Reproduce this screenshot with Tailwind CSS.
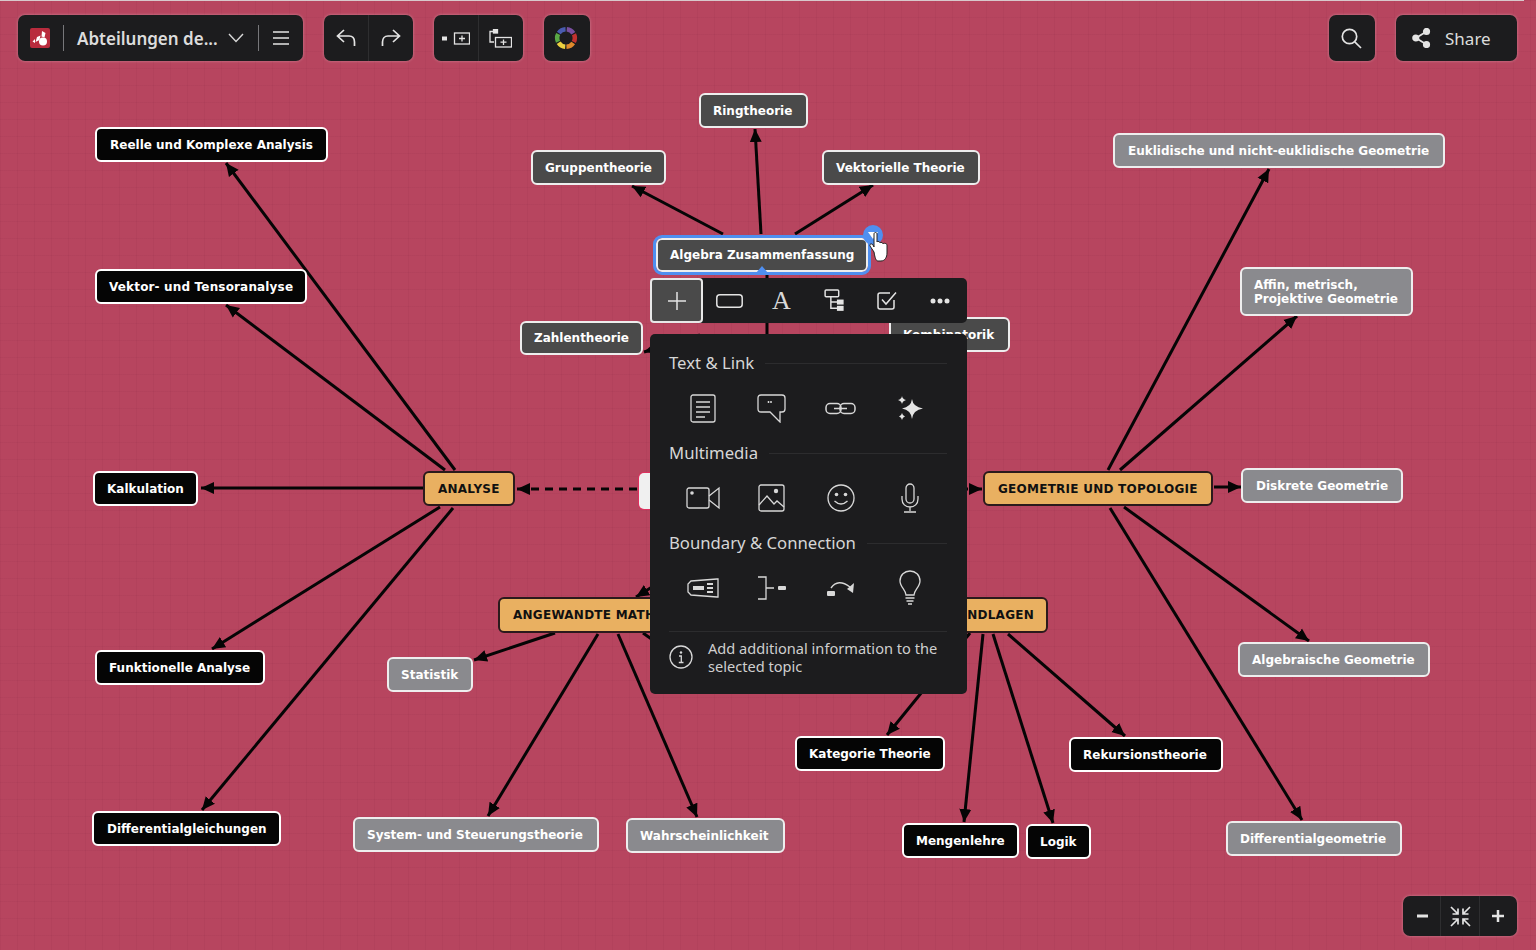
<!DOCTYPE html>
<html lang="de">
<head>
<meta charset="utf-8">
<title>Abteilungen der Mathematik</title>
<script src="https://cdn.jsdelivr.net/npm/@tailwindcss/browser@4"></script>
</head>
<body class="m-0">
<div class="relative w-[1536px] h-[950px] overflow-hidden bg-[#b7455f] font-['Noto_Sans',sans-serif]">
  <!-- grid -->
  <div class="absolute inset-0 bg-[linear-gradient(rgba(120,30,60,0.07)_1px,transparent_1px),linear-gradient(90deg,rgba(120,30,60,0.07)_1px,transparent_1px)] bg-[size:17px_17px]"></div>
  <div class="absolute left-0 top-0 h-px w-[1524px] bg-[#d8c8cc]"></div>

  <!-- edges -->
  <svg class="absolute inset-0" width="1536" height="950" fill="none" stroke="#050505" stroke-width="3">
    <defs>
      <marker id="a" markerUnits="userSpaceOnUse" markerWidth="14" markerHeight="14" refX="13" refY="7" orient="auto"><path d="M0 1 L13 7 L0 13 Z" fill="#050505" stroke="none"/></marker>
    </defs>
    <g marker-end="url(#a)">
      <path d="M455 470L226 163"/><path d="M445 470L226 305"/><path d="M423 488L201 488"/><path d="M440 507L212 649"/><path d="M453 508L202 810"/>
      <path d="M637 489L517 489" stroke-dasharray="8 6"/>
      <path d="M555 633L474 660"/><path d="M598 634L488 816"/><path d="M618 634L697 817"/><path d="M660 582L636 597"/>
      <path d="M723 234L632 186"/><path d="M761 234L755 129"/><path d="M795 234L873 185"/>
      <path d="M700 335L644 352"/>
      <path d="M1108 470L1269 169"/><path d="M1120 470L1297 316"/><path d="M1214 487L1241 487"/><path d="M1110 508L1302 820"/><path d="M1124 507L1309 641"/>
      <path d="M960 489L982 489" stroke-dasharray="8 6"/>
      <path d="M983 634L964 822"/><path d="M993 634L1053 823"/><path d="M1008 634L1125 736"/><path d="M970 633L887 735"/>
    </g>
    <path d="M767 262L767 340"/><path d="M643 633L660 645"/>
  </svg>

  <!-- nodes -->
  <div class="absolute inset-0 font-['DejaVu_Sans',sans-serif] text-[12px] font-bold whitespace-nowrap text-white">
    <div class="absolute left-[639px] top-[473px] h-[36px] w-[120px] rounded-[5px] bg-[#f0f0f0] ring-1 ring-[#e0305f]"></div>

    <div class="absolute left-[95px] top-[127px] h-[35px] flex items-center px-[13px] rounded-[6px] border-2 border-white bg-[#050505]">Reelle und Komplexe Analysis</div>
    <div class="absolute left-[95px] top-[269px] h-[35px] flex items-center pl-[12px] pr-[12px] tracking-[0.16px] rounded-[6px] border-2 border-white bg-[#050505]">Vektor- und Tensoranalyse</div>
    <div class="absolute left-[93px] top-[471px] h-[35px] flex items-center px-[12px] rounded-[6px] border-2 border-white bg-[#050505]">Kalkulation</div>
    <div class="absolute left-[95px] top-[650px] h-[35px] flex items-center pl-[12px] pr-[13px] rounded-[6px] border-2 border-white bg-[#050505]">Funktionelle Analyse</div>
    <div class="absolute left-[92px] top-[811px] h-[35px] flex items-center px-[12px] pl-[13px] rounded-[6px] border-2 border-white bg-[#050505]">Differentialgleichungen</div>

    <div class="absolute left-[423px] top-[471px] h-[35px] flex items-center px-[13px] rounded-[6px] border-2 border-[#2b1a1c] bg-[#e9b061] text-[#111] tracking-[0.25px]">ANALYSE</div>
    <div class="absolute left-[498px] top-[597px] h-[36px] flex items-center px-[13px] rounded-[6px] border-2 border-[#2b1a1c] bg-[#e9b061] text-[#111] tracking-[0.25px]">ANGEWANDTE MATHEMATIK</div>
    <div class="absolute left-[983px] top-[471px] h-[35px] flex items-center px-[13px] rounded-[6px] border-2 border-[#2b1a1c] bg-[#e9b061] text-[#111] tracking-[0.25px]">GEOMETRIE UND TOPOLOGIE</div>
    <div class="absolute left-[840px] top-[597px] w-[208px] h-[36px] flex items-center justify-end px-[12px] rounded-[6px] border-2 border-[#2b1a1c] bg-[#e9b061] text-[#111] tracking-[0.25px]">GRUNDLAGEN</div>

    <div class="absolute left-[387px] top-[657px] h-[35px] flex items-center pl-[12px] pr-[13px] rounded-[6px] border-2 border-[#eee] bg-[#8a8a8e]">Statistik</div>
    <div class="absolute left-[353px] top-[817px] h-[35px] flex items-center pl-[12px] pr-[14px] rounded-[6px] border-2 border-[#eee] bg-[#8a8a8e]">System- und Steuerungstheorie</div>
    <div class="absolute left-[626px] top-[818px] h-[35px] flex items-center pl-[12px] pr-[14px] rounded-[6px] border-2 border-[#eee] bg-[#8a8a8e]">Wahrscheinlichkeit</div>

    <div class="absolute left-[699px] top-[93px] h-[35px] flex items-center pl-[12px] pr-[14px] rounded-[6px] border-2 border-[#eee] bg-[#4a4a4a]">Ringtheorie</div>
    <div class="absolute left-[531px] top-[150px] h-[35px] flex items-center px-[12px] rounded-[6px] border-2 border-[#eee] bg-[#4a4a4a]">Gruppentheorie</div>
    <div class="absolute left-[822px] top-[150px] h-[35px] flex items-center pl-[12px] pr-[13px] rounded-[6px] border-2 border-[#eee] bg-[#4a4a4a]">Vektorielle Theorie</div>
    <div class="absolute left-[520px] top-[321px] h-[34px] flex items-center px-[12px] rounded-[6px] border-2 border-[#eee] bg-[#4a4a4a]">Zahlentheorie</div>
    <div class="absolute left-[889px] top-[317px] h-[35px] flex items-center pl-[12px] pr-[14px] rounded-[6px] border-2 border-[#eee] bg-[#4a4a4a]">Kombinatorik</div>

    <div class="absolute left-[656px] top-[238px] h-[34px] flex items-center px-[12px] rounded-[6px] border-2 border-[#eee] bg-[#4a4a4a] outline-[3px] outline-[#4f8ff0] outline-offset-0">Algebra Zusammenfassung</div>

    <div class="absolute left-[1113px] top-[133px] h-[35px] flex items-center pl-[13px] pr-[14px] rounded-[6px] border-2 border-[#eee] bg-[#8a8a8e]">Euklidische und nicht-euklidische Geometrie</div>
    <div class="absolute left-[1240px] top-[267px] h-[49px] flex items-center pl-[12px] pr-[13px] rounded-[6px] border-2 border-[#eee] bg-[#8a8a8e] leading-[14px]">Affin, metrisch,<br>Projektive Geometrie</div>
    <div class="absolute left-[1241px] top-[468px] h-[35px] flex items-center px-[13px] rounded-[6px] border-2 border-[#eee] bg-[#8a8a8e]">Diskrete Geometrie</div>
    <div class="absolute left-[1238px] top-[642px] h-[35px] flex items-center pl-[12px] pr-[13px] rounded-[6px] border-2 border-[#eee] bg-[#8a8a8e]">Algebraische Geometrie</div>
    <div class="absolute left-[1226px] top-[821px] h-[35px] flex items-center pl-[12px] pr-[14px] rounded-[6px] border-2 border-[#eee] bg-[#8a8a8e]">Differentialgeometrie</div>

    <div class="absolute left-[795px] top-[736px] h-[35px] flex items-center px-[12px] rounded-[6px] border-2 border-white bg-[#050505]">Kategorie Theorie</div>
    <div class="absolute left-[1069px] top-[737px] h-[35px] flex items-center pl-[12px] pr-[14px] rounded-[6px] border-2 border-white bg-[#050505]">Rekursionstheorie</div>
    <div class="absolute left-[902px] top-[823px] h-[35px] flex items-center px-[12px] rounded-[6px] border-2 border-white bg-[#050505]">Mengenlehre</div>
    <div class="absolute left-[1026px] top-[824px] h-[35px] flex items-center px-[12px] rounded-[6px] border-2 border-white bg-[#050505]">Logik</div>

    <!-- selection decorations -->
    <svg class="absolute left-[755px] top-[266px]" width="14" height="8"><path d="M7 0L13 7H1Z" fill="#4f8ff0"/></svg>
    <svg class="absolute left-[860px] top-[224px]" width="30" height="40">
      <circle cx="13" cy="11" r="10" fill="#4f8ff0"/>
      <path d="M8 8H18L13 15Z" fill="#fff"/>
      <path d="M14 28L10 22C9 20 12 19 13 21L14 23V10C14 8 17 8 17 10V18C17 17 20 17 20 19C20 18 23 18 23 20C23 19 27 19 27 21V29C27 33 25 37 21 37H18C16 37 15 34 14 28Z" fill="#fff" stroke="#222" stroke-width="1"/>
    </svg>
  </div>

  <!-- top toolbar -->
  <div class="absolute left-0 right-0 top-[15px] flex justify-between pl-[18px] pr-[19px] text-[#e4e4e4]">
    <div class="flex gap-[21px]">
      <div class="flex items-center h-[46px] w-[285px] rounded-[7px] bg-[#1c1c1e] shadow-[0_0_3px_rgba(255,255,255,0.35)] pl-[11px]">
        <svg width="22" height="22" viewBox="0 0 22 22"><rect x="1" y="1" width="20" height="20" rx="2" fill="#b92b3d"/><circle cx="14" cy="14.500" r="4" fill="#fff"/><path d="M13 4L16.500 6L15.500 10.500L12.500 9.500Z M8 10L11.500 8.500L10.500 13L6.500 15Z M3.500 14.500L6 12L6 16Z" fill="#fff"/></svg>
        <div class="ml-[12px] h-[26px] w-px bg-[#77777a]"></div>
        <span class="ml-[13px] w-[141px] text-[17px] font-semibold leading-none text-[#dcdcdc] whitespace-nowrap">Abteilungen de...</span>
        <svg class="ml-[10px]" width="16" height="10" viewBox="0 0 16 10" fill="none" stroke="#d8d8d8" stroke-width="1.4"><path d="M1 1L8 8.500L15 1"/></svg>
        <div class="ml-[14px] h-[26px] w-px bg-[#77777a]"></div>
        <svg class="ml-[14px]" width="16" height="14" viewBox="0 0 16 14" stroke="#e4e4e4" stroke-width="1.5"><path d="M0 1H16M0 7H16M0 13H16"/></svg>
      </div>
      <div class="flex h-[46px] w-[89px] rounded-[7px] bg-[#1c1c1e] shadow-[0_0_3px_rgba(255,255,255,0.35)] divide-x divide-[#2e2e30]">
        <div class="flex flex-1 items-center justify-center">
          <svg width="20" height="18" viewBox="0 0 20 18" fill="none" stroke="#e4e4e4" stroke-width="1.7"><path d="M8 1L1.500 7L8 13M1.500 7H13C16.500 7 18.500 9.500 18.500 13V17"/></svg>
        </div>
        <div class="flex flex-1 items-center justify-center">
          <svg width="20" height="18" viewBox="0 0 20 18" fill="none" stroke="#e4e4e4" stroke-width="1.7"><path d="M12 1L18.500 7L12 13M18.500 7H7C3.500 7 1.500 9.500 1.500 13V17"/></svg>
        </div>
      </div>
      <div class="flex h-[46px] w-[89px] rounded-[7px] bg-[#1c1c1e] shadow-[0_0_3px_rgba(255,255,255,0.35)] divide-x divide-[#2e2e30]">
        <div class="flex flex-1 items-center justify-center">
          <svg width="28" height="13" viewBox="0 0 28 13" fill="none" stroke="#e4e4e4" stroke-width="1.300"><rect x="0" y="4.500" width="5" height="4" fill="#e4e4e4" stroke="none"/><rect x="12.500" y="1" width="15" height="11"/><path d="M20 3.500V9.500M17 6.500H23"/></svg>
        </div>
        <div class="flex flex-1 items-center justify-center">
          <svg class="-ml-[2px]" width="23" height="19" viewBox="0 0 23 19" fill="none" stroke="#e4e4e4" stroke-width="1.3"><rect x="4.500" y="0.500" width="4" height="3.500" fill="#e4e4e4"/><path d="M4 2.500H1V13H5"/><rect x="6.500" y="8.500" width="16" height="9.500"/><path d="M14.500 10.500V16M11.500 13.200H17.500"/></svg>
        </div>
      </div>
      <div class="flex h-[46px] w-[46px] items-center justify-center rounded-[7px] bg-[#1c1c1e] shadow-[0_0_3px_rgba(255,255,255,0.35)]">
        <svg class="-ml-[3px]" width="24" height="24" viewBox="0 0 24 24" fill="none" stroke-width="4.500">
          <circle cx="12" cy="12" r="8.800" pathLength="360" stroke-dasharray="52 308" transform="rotate(-85 12 12)" stroke="#7a4fa0"/>
          <circle cx="12" cy="12" r="8.800" pathLength="360" stroke-dasharray="52 308" transform="rotate(-25 12 12)" stroke="#c2312f"/>
          <circle cx="12" cy="12" r="8.800" pathLength="360" stroke-dasharray="52 308" transform="rotate(35 12 12)" stroke="#e08a2c"/>
          <circle cx="12" cy="12" r="8.800" pathLength="360" stroke-dasharray="52 308" transform="rotate(95 12 12)" stroke="#ecd040"/>
          <circle cx="12" cy="12" r="8.800" pathLength="360" stroke-dasharray="52 308" transform="rotate(155 12 12)" stroke="#5aa845"/>
          <circle cx="12" cy="12" r="8.800" pathLength="360" stroke-dasharray="52 308" transform="rotate(215 12 12)" stroke="#4a5bb0"/>
        </svg>
      </div>
    </div>
    <div class="flex gap-[21px]">
      <div class="flex h-[46px] w-[46px] items-center justify-center rounded-[7px] bg-[#1c1c1e] shadow-[0_0_3px_rgba(255,255,255,0.35)]">
        <svg class="-ml-[1px]" width="21" height="21" viewBox="0 0 21 21" fill="none" stroke="#e4e4e4" stroke-width="1.700"><circle cx="8.500" cy="8.500" r="7.200"/><path d="M13.800 13.800L20 20"/></svg>
      </div>
      <div class="flex h-[46px] w-[121px] items-center rounded-[7px] bg-[#1c1c1e] shadow-[0_0_3px_rgba(255,255,255,0.35)] pl-[16px]">
        <svg width="19" height="20" viewBox="0 0 19 20" fill="#e4e4e4" stroke="#e4e4e4" stroke-width="1.800"><path d="M14.500 3.500L4 10L14.500 16.500" fill="none"/><circle cx="14.500" cy="3.500" r="2.700"/><circle cx="3.800" cy="10" r="2.700"/><circle cx="14.500" cy="16.500" r="2.700"/></svg>
        <span class="ml-[14px] text-[17px] leading-none text-[#dcdcdc]">Share</span>
      </div>
    </div>
  </div>

  <!-- node toolbar -->
  <div class="absolute left-[650px] top-[278px] flex h-[45px] w-[317px] items-center rounded-[5px] bg-[#1c1c1e]">
    <div class="flex h-[45px] w-[53px] items-center justify-center rounded-[4px] border-[2.500px] border-[#e8e8e8] bg-[#4a4a4a]">
      <svg width="20" height="20" viewBox="0 0 20 20" stroke="#e4e4e4" stroke-width="1.500"><path d="M10 1V19M1 10H19"/></svg>
    </div>
    <div class="flex w-[53px] justify-center">
      <svg width="27" height="14" viewBox="0 0 27 14" fill="none" stroke="#e4e4e4" stroke-width="1.500"><rect x="0.800" y="0.800" width="25.400" height="12.400" rx="3"/></svg>
    </div>
    <div class="flex w-[51px] justify-center">
      <span class="font-['Liberation_Serif',serif] text-[26px] leading-none text-[#d8d8d8]">A</span>
    </div>
    <div class="flex w-[53px] justify-center">
      <svg width="20" height="23" viewBox="0 0 19 22" fill="none" stroke="#e4e4e4" stroke-width="1.400"><rect x="1" y="1" width="13" height="6.500" rx="1"/><path d="M6.500 7.500V18.500H13M6.500 12.500H13"/><rect x="13" y="10.800" width="5" height="3.400" fill="#e4e4e4"/><rect x="13" y="16.800" width="5" height="3.400" fill="#e4e4e4"/></svg>
    </div>
    <div class="flex w-[53px] justify-center">
      <svg width="20" height="19" viewBox="0 0 20 19" fill="none" stroke="#e4e4e4" stroke-width="1.500"><path d="M17 9V16C17 17 16 18 15 18H3C2 18 1 17 1 16V4C1 3 2 2 3 2H13"/><path d="M5 8.500L9 13L19 1.500"/></svg>
    </div>
    <div class="flex w-[53px] justify-center">
      <svg width="20" height="6" viewBox="0 0 20 6" fill="#e4e4e4"><circle cx="3" cy="3" r="2.500"/><circle cx="10" cy="3" r="2.500"/><circle cx="17" cy="3" r="2.500"/></svg>
    </div>
  </div>

  <!-- add panel -->
  <div class="absolute left-[650px] top-[334px] h-[360px] w-[317px] rounded-[5px] bg-[#1c1c1e] pl-[19px] pr-[20px] pt-[17px] text-[#d6d6d6]">
    <div class="flex h-[24px] items-center gap-[11px] text-[16.700px]"><span>Text &amp; Link</span><div class="h-px flex-1 bg-[#2c2c2e]"></div></div>
    <div class="mt-[10px] -ml-[1px] grid h-[46px] w-[276px] grid-cols-4 place-items-center">
      <svg width="26" height="29" viewBox="0 0 26 29" fill="none" stroke="#d8d8d8" stroke-width="1.300"><rect x="1" y="1" width="24" height="27" rx="2"/><path d="M6 8H20M6 13H20M6 18H20M6 23H15"/></svg>
      <svg width="29" height="29" viewBox="0 0 29 29" fill="none" stroke="#d8d8d8" stroke-width="1.300"><path d="M4 1H25C27 1 28 2 28 4V15C28 17 27 18 25 18H23V28L13 18H4C2 18 1 17 1 15V4C1 2 2 1 4 1Z"/><path d="M11.500 7V9M14 7V9" stroke-width="1.500"/></svg>
      <svg width="31" height="13" viewBox="0 0 31 13" fill="none" stroke="#d8d8d8" stroke-width="1.500"><rect x="1" y="1.500" width="15" height="10" rx="4"/><rect x="15" y="1.500" width="15" height="10" rx="4"/><path d="M9 6.500H22"/></svg>
      <svg width="26" height="25" viewBox="0 0 26 25" fill="#e4e4e4"><path d="M15 3Q16 11 26 12.500Q16 14 15 23Q14 14 5 12.500Q14 11 15 3Z"/><path d="M5 0Q5.500 3 9 4Q5.500 5 5 8Q4.500 5 1 4Q4.500 3 5 0Z"/><path d="M5 17Q5.500 19.500 8 20.500Q5.500 21 5 24Q4.500 21 2 20.500Q4.500 19.500 5 17Z"/></svg>
    </div>
    <div class="mt-[10px] flex h-[24px] items-center gap-[11px] text-[16.700px]"><span>Multimedia</span><div class="h-px flex-1 bg-[#2c2c2e]"></div></div>
    <div class="mt-[10px] -ml-[1px] grid h-[46px] w-[276px] grid-cols-4 place-items-center">
      <svg width="34" height="24" viewBox="0 0 34 24" fill="none" stroke="#d8d8d8" stroke-width="1.300"><rect x="1" y="2" width="22" height="20" rx="2"/><path d="M23 10L33 2V22L23 14"/><circle cx="6" cy="7" r="1.800" fill="#d8d8d8" stroke="none"/></svg>
      <svg width="27" height="28" viewBox="0 0 27 28" fill="none" stroke="#d8d8d8" stroke-width="1.300"><rect x="1" y="1" width="25" height="26" rx="2"/><path d="M1 21L9 12L16 20L19 17L26 23"/><circle cx="18" cy="7" r="2.200" fill="#d8d8d8" stroke="none"/></svg>
      <svg width="28" height="28" viewBox="0 0 28 28" fill="none" stroke="#d8d8d8" stroke-width="1.300"><circle cx="14" cy="14" r="13"/><circle cx="9.500" cy="10.500" r="1.800" fill="#d8d8d8" stroke="none"/><circle cx="18.500" cy="10.500" r="1.800" fill="#d8d8d8" stroke="none"/><path d="M7.500 17Q14 23 20.500 17"/></svg>
      <svg width="18" height="30" viewBox="0 0 18 30" fill="none" stroke="#d8d8d8" stroke-width="1.300"><rect x="5" y="1" width="8" height="19" rx="4"/><path d="M1 13V16C1 21 4.500 24 9 24C13.500 24 17 21 17 16V13M9 24V28M3 29H15"/></svg>
    </div>
    <div class="mt-[10px] flex h-[24px] items-center gap-[11px] text-[16.700px]"><span>Boundary &amp; Connection</span><div class="h-px flex-1 bg-[#2c2c2e]"></div></div>
    <div class="mt-[10px] -ml-[1px] grid h-[46px] w-[276px] grid-cols-4 place-items-center">
      <svg width="32" height="20" viewBox="0 0 32 20" fill="none" stroke="#d8d8d8" stroke-width="1.300"><path d="M4 3L30 1H31V19H30L4 17L1 14V6Z"/><rect x="6" y="8" width="11" height="4" fill="#d8d8d8" stroke="none"/><path d="M20 6H26M20 10H26M20 14H26" stroke-width="2"/></svg>
      <svg width="30" height="24" viewBox="0 0 30 24" fill="none" stroke="#d8d8d8" stroke-width="1.300"><path d="M1 1H9V23H1M9 12H17"/><rect x="21" y="10" width="8" height="4" rx="1" fill="#d8d8d8" stroke="none"/></svg>
      <svg width="29" height="18" viewBox="0 0 29 18" fill="none" stroke="#d8d8d8" stroke-width="1.400"><rect x="1" y="12" width="8" height="5" rx="1" fill="#d8d8d8" stroke="none"/><path d="M5 9Q12 -1 24 8"/><path d="M28 4L27 14L21 10Z" fill="#d8d8d8" stroke="none"/></svg>
      <svg width="22" height="36" viewBox="0 0 22 36" fill="none" stroke="#d8d8d8" stroke-width="1.300"><path d="M7 25C7 20 1 17 1 11C1 5 5.500 1 11 1C16.500 1 21 5 21 11C21 17 15 20 15 25Z"/><path d="M6.500 28H15.500M7.500 31H14.500M9 34H13" stroke-width="1.600"/></svg>
    </div>
    <div class="mt-[20px] h-px bg-[#2c2c2e]"></div>
    <div class="mt-[7px] flex items-center">
      <svg width="24" height="24" viewBox="0 0 24 24" fill="none" stroke="#d8d8d8" stroke-width="1.300"><circle cx="12" cy="12" r="11"/><circle cx="12" cy="7.500" r="1.200" fill="#d8d8d8" stroke="none"/><path d="M10 11H12.300V17.500M9.800 17.500H14.500"/></svg>
      <p class="ml-[15px] text-[14.600px] leading-[18px] text-[#cfcfcf]">Add additional information to the<br>selected topic</p>
    </div>
  </div>

  <!-- zoom control -->
  <div class="absolute left-[1403px] top-[896px] flex h-[40px] w-[114px] divide-x divide-[#2e2e30] rounded-[7px] bg-[#1c1c1e] text-[#e4e4e4] shadow-[0_0_3px_rgba(255,255,255,0.35)]">
    <div class="flex flex-1 items-center justify-center"><svg class="ml-[1px]" width="11" height="4" viewBox="0 0 11 4"><rect width="11" height="3" y="0.500" fill="#e4e4e4"/></svg></div>
    <div class="flex flex-1 items-center justify-center">
      <svg class="ml-[1px]" width="21" height="21" viewBox="0 0 21 21" fill="none" stroke="#e4e4e4" stroke-width="1.700"><path d="M1 1L8 8M8 2.500V8H2.500M20 1L13 8M13 2.500V8H18.500M1 20L8 13M8 18.500V13H2.500M20 20L13 13M13 18.500V13H18.500"/></svg>
    </div>
    <div class="flex flex-1 items-center justify-center"><svg width="12" height="12" viewBox="0 0 12 12" stroke="#e4e4e4" stroke-width="2.500"><path d="M6 0V12M0 6H12"/></svg></div>
  </div>
</div>
</body>
</html>
